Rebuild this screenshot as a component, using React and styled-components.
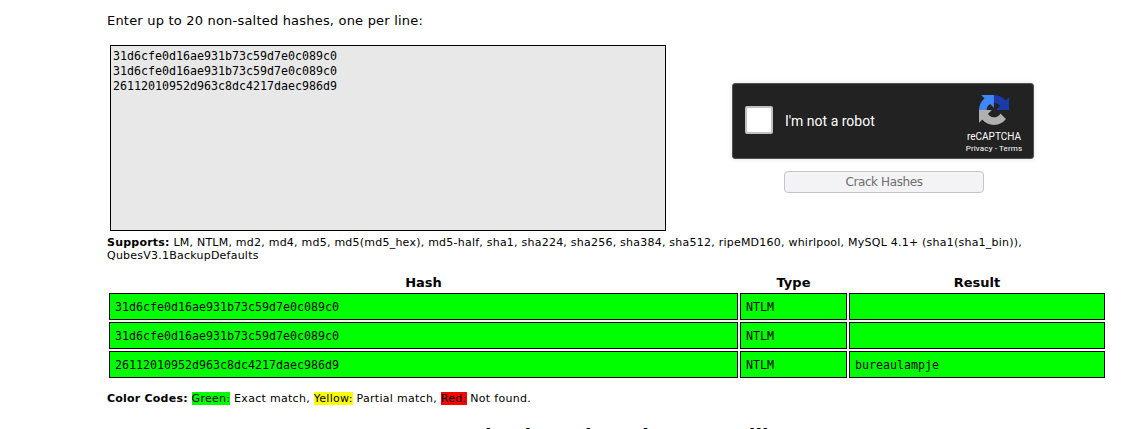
import React from "react";
import styled, { createGlobalStyle } from "styled-components";

const sans = `Verdana, "DejaVu Sans", sans-serif`;
const mono = `"DejaVu Sans Mono", monospace`;

const GlobalStyle = createGlobalStyle`
  html, body { margin: 0; background: #fff; overflow: hidden; }
  #root { height: 429px; overflow: hidden; }
`;

const Page = styled.main`
  box-sizing: border-box;
  width: 1000px;
  margin-left: 107px;
  padding-top: 13px;
  color: #000;
  font-family: ${sans};
`;

const Prompt = styled.p`
  margin: 0;
  font-size: 13px;
  line-height: 16px;
  letter-spacing: 0.2px;
`;

const Form = styled.form`
  display: flex;
  align-items: flex-start;
  margin: 16px 0 0 3px;
`;

const HashInput = styled.textarea`
  box-sizing: border-box;
  display: block;
  width: 556px;
  height: 186px;
  margin: 0;
  padding: 3px 2px;
  border: 1px solid #000;
  border-radius: 0;
  background: #e8e8e8;
  color: #000;
  font: 11.63px/15px ${mono};
  resize: none;
  outline: none;
  overflow: hidden;
`;

const Actions = styled.div`
  display: flex;
  flex-direction: column;
  align-items: center;
  gap: 12px;
  margin: 38px 0 0 66px;
`;

const Captcha = styled.div`
  box-sizing: border-box;
  display: flex;
  align-items: flex-start;
  width: 302px;
  height: 76px;
  padding-left: 12px;
  border: 1px solid #525252;
  border-radius: 3px;
  background: #222;
  box-shadow: 0 0 4px 1px rgba(0, 0, 0, 0.08);
  color: #fff;
  font-family: Roboto, sans-serif;
`;

const Check = styled.span`
  box-sizing: border-box;
  width: 28px;
  height: 28px;
  margin-top: 22px;
  border: 2px solid #c1c1c1;
  border-radius: 2px;
  background: #fff;
`;

const CaptchaLabel = styled.span`
  flex: 1;
  margin: 28px 0 0 12px;
  font-size: 14px;
  line-height: 18px;
`;

const Brand = styled.div`
  display: flex;
  flex-direction: column;
  align-items: center;
  width: 78px;
  padding-top: 11px;
  white-space: nowrap;
`;

const Logo = styled.svg`
  display: block;
  width: 30px;
  height: 30px;
`;

const BrandName = styled.span`
  margin-top: 6px;
  font-size: 10px;
  line-height: 12px;
`;

const BrandLinks = styled.span`
  font-size: 8px;
  line-height: 11px;
  letter-spacing: 0.15px;
`;

const CrackButton = styled.button`
  box-sizing: border-box;
  width: 200px;
  height: 22px;
  margin-left: 2px;
  padding: 0;
  border: 1px solid #c4c4cb;
  border-radius: 4px;
  background: #f3f3f5;
  color: #6d6d6d;
  font: 12px/18px ${sans};
  letter-spacing: -0.4px;
`;

const Note = styled.p`
  margin: ${(p) => p.$top}px 0 0;
  font-size: 11px;
  line-height: 13px;
  letter-spacing: ${(p) => p.$tracking}px;

  b {
    letter-spacing: 0.22px;
  }
`;

const Results = styled.table`
  width: 1000px;
  margin-top: 11px;
  border-spacing: 2px;
  table-layout: fixed;
`;

const Heading = styled.th`
  width: ${(p) => p.$width}px;
  height: 16px;
  padding: 0;
  font-size: 13px;
  line-height: 16px;
`;

const Cell = styled.td`
  box-sizing: border-box;
  height: 27px;
  padding: 1px 5px 0;
  border: 1px solid #000;
  background: #0f0;
  font: 11.63px/15px ${mono};
`;

const Code = styled.span`
  background: ${(p) => p.$color};
`;

const SectionTitle = styled.h2`
  margin: 20px 0 0;
  font-size: 19px;
  line-height: 22px;
  text-align: center;
`;

const hashes = [
  ["31d6cfe0d16ae931b73c59d7e0c089c0", "NTLM", ""],
  ["31d6cfe0d16ae931b73c59d7e0c089c0", "NTLM", ""],
  ["26112010952d963c8dc4217daec986d9", "NTLM", "bureaulampje"],
];

function RecaptchaLogo() {
  return (
    <Logo viewBox="0 0 64 64" aria-hidden="true">
      <path fill="#1c3aa9" d="M64 31.955l-.033-1.37V4.687l-7.16 7.16C50.948 4.674 42.033.093 32.05.093c-10.4 0-19.622 4.96-25.458 12.64l11.736 11.86a15.55 15.55 0 0 1 4.754-5.334c2.05-1.6 4.952-2.906 8.968-2.906.485 0 .86.057 1.135.163 4.976.393 9.288 3.14 11.828 7.124l-8.307 8.307L64 31.953" />
      <path fill="#4285f4" d="M31.862.094l-1.37.033H4.594l7.16 7.16C4.58 13.147 0 22.06 0 32.046c0 10.4 4.96 19.622 12.64 25.458L24.5 45.768a15.55 15.55 0 0 1-5.334-4.754c-1.6-2.05-2.906-4.952-2.906-8.968 0-.485.057-.86.163-1.135.393-4.976 3.14-9.288 7.124-11.828l8.307 8.307L31.86.095" />
      <path fill="#b0b0b0" d="M.001 32.045l.033 1.37v25.898l7.16-7.16c5.86 7.173 14.774 11.754 24.76 11.754 10.4 0 19.622-4.96 25.458-12.64l-11.736-11.86a15.55 15.55 0 0 1-4.754 5.334c-2.05 1.6-4.952 2.906-8.968 2.906-.485 0-.86-.057-1.135-.163-4.976-.393-9.288-3.14-11.828-7.124l8.307-8.307c-10.522.04-22.4.066-27.295-.005" />
    </Logo>
  );
}

export default function App() {
  return (
    <>
      <GlobalStyle />
      <Page>
        <Prompt>Enter up to 20 non-salted hashes, one per line:</Prompt>
        <Form>
          <HashInput
            spellCheck={false}
            defaultValue={hashes.map(([hash]) => hash).join("\n")}
          />
          <Actions>
            <Captcha>
              <Check />
              <CaptchaLabel>I'm not a robot</CaptchaLabel>
              <Brand>
                <RecaptchaLogo />
                <BrandName>reCAPTCHA</BrandName>
                <BrandLinks>Privacy - Terms</BrandLinks>
              </Brand>
            </Captcha>
            <CrackButton type="button">Crack Hashes</CrackButton>
          </Actions>
        </Form>
        <Note $top={5} $tracking={0.23}>
          <b>Supports:</b> LM, NTLM, md2, md4, md5, md5(md5_hex), md5-half,
          sha1, sha224, sha256, sha384, sha512, ripeMD160, whirlpool, MySQL
          4.1+ (sha1(sha1_bin)),
          <br />
          QubesV3.1BackupDefaults
        </Note>
        <Results>
          <thead>
            <tr>
              <Heading $width={629}>Hash</Heading>
              <Heading $width={107}>Type</Heading>
              <Heading $width={256}>Result</Heading>
            </tr>
          </thead>
          <tbody>
            {hashes.map((row, i) => (
              <tr key={i}>
                {row.map((value, j) => (
                  <Cell key={j}>{value}</Cell>
                ))}
              </tr>
            ))}
          </tbody>
        </Results>
        <Note $top={12} $tracking={0.29}>
          <b>Color Codes:</b> <Code $color="#0f0">Green:</Code> Exact match,{" "}
          <Code $color="#ff0">Yellow:</Code> Partial match,{" "}
          <Code $color="#f00">Red:</Code> Not found.
        </Note>
        <SectionTitle>Download CrackStation's Wordlist</SectionTitle>
      </Page>
    </>
  );
}
